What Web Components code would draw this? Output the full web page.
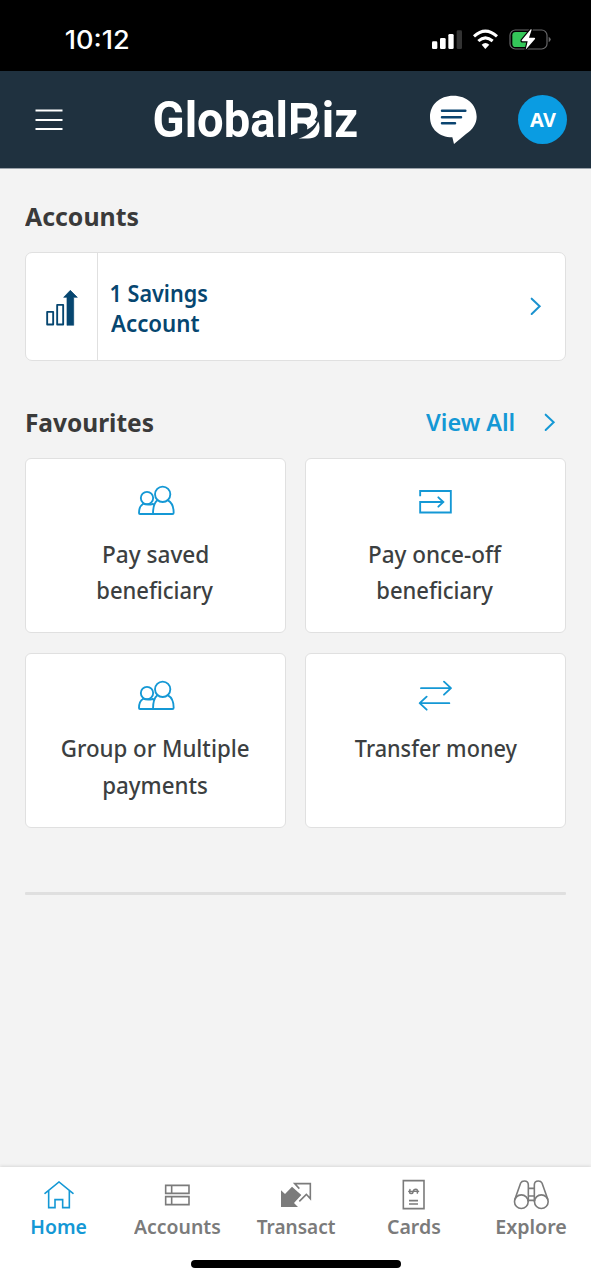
<!DOCTYPE html>
<html lang="en">
<head>
<meta charset="utf-8">
<meta name="viewport" content="width=device-width">
<title>GlobalBiz</title>
<style>
body{margin:0;background:#f3f3f3;font-family:"Noto Sans",sans-serif;color:#3c3f41}
</style>
</head>
<body>
<biz-app></biz-app>
<script>
const define = (name, html, ready) => {
  const tpl = document.createElement('template');
  tpl.innerHTML = html;
  customElements.define(name, class extends HTMLElement {
    connectedCallback() {
      if (this.shadowRoot) return;
      this.attachShadow({mode: 'open'}).append(tpl.content.cloneNode(true));
      if (ready) ready(this, this.shadowRoot);
    }
  });
};

const ctx = document.createElement('canvas').getContext('2d');

/* One line of text whose inked width fills the box given by "w". */
define('fit-text', `<style>
:host{display:block;flex:none;white-space:nowrap}
span{display:inline-block;transform-origin:0 50%}
</style><span><slot></slot></span>`, (el, root) => {
  const w = +el.getAttribute('w');
  const cs = getComputedStyle(el);
  /* Measured large, since small sizes report bounds in whole pixels. */
  const size = parseFloat(cs.fontSize);
  ctx.font = `${cs.fontWeight} ${size * 10}px ${cs.fontFamily}`;
  const m = ctx.measureText(el.textContent.trim());
  const left = m.actualBoundingBoxLeft / 10;
  const k = w / (m.actualBoundingBoxRight / 10 + left);
  el.style.width = w + 'px';
  root.querySelector('span').style.transform =
    `translateX(${left * k}px) scaleX(${k})`;
});

const icons = {
  people: ['380 258 114 94', 5.6, `<circle cx="410" cy="297" r="18.500"/><circle cx="457" cy="286" r="23"/><path d="M398 315C389 320 386 331 386 342Q386 345 389 345H486Q490 345 490 341C490 324 484 310 473 304M441 304C432 311 428 326 428 345M398 314Q410 319 428 315"/>`],
  payin: ['355 117 103 75', 5.6, `<path stroke-linejoin="miter" stroke-linecap="butt" d="M361.500 139V123H453.500V187.500H361.500V156H431"/><path stroke-linejoin="miter" d="M416 142L431 156L416 170"/>`],
  swap: ['356 122 104 94', 5.6, `<path d="M365 146.500H454M434 127L455 146.500L434 166M450 191.500H362M382 172L361 191.500L382 211"/>`],
  chevron: ['714 168 40 62', 6, `<path stroke-linejoin="miter" d="M722 176L746 199L722 222"/>`],
  bars: ['134 298 102 115', 5.6, `<rect x="140.500" y="366.500" width="18" height="38"/><rect x="170.500" y="345.500" width="18" height="59"/><path fill="currentColor" stroke-width="2" d="M200 406V323H190L210 302L231 323H220V406Z"/>`],
  home: ['130 78 96 87', 4.8, `<path stroke-linejoin="miter" d="M136 115L178 81L220 115M147 107V158H166V134H189V158H209V107"/>`],
  accounts: ['492 87 80 67', 4.8, `<path stroke-linejoin="miter" d="M497 91H567V115H497ZM515 91V115M497 125H567V149H497ZM515 125V149"/>`],
  transact: ['178 81 96 80', 4.8, `<path stroke-linejoin="miter" fill="currentColor" stroke="none" d="M181 106L193 117L214 95L242 120L220 144L232 156H181Z"/><path stroke-linejoin="miter" stroke-linecap="butt" d="M236 101L222 86H269V131L257 118L236 139"/>`],
  cards: ['33 72 71 94', 4.8, `<path stroke-linejoin="miter" d="M37 77H99V161H37Z"/><path stroke-linecap="butt" d="M54 137H81M54 147H81"/><path d="M57 104Q53 116 61 115.500Q66 115 67 109Q68 103 74 103Q82 103 79 114"/><path stroke-width="4" d="M53 109H83"/>`],
  explore: ['367 73 111 93', 4.8, `<circle cx="392" cy="138" r="20.500"/><circle cx="452" cy="138" r="20.500"/><path d="M373 130L390 82Q393 76 401 76Q413 76 413 88V137M471 130L454 82Q451 76 443 76Q431 76 431 88V137M414 98H430M414 121H430M412 134H432"/>`]
};

define('line-icon', `<style>
:host{display:block;flex:none;line-height:0}
svg{display:block;fill:none;stroke:currentColor;stroke-linecap:round;stroke-linejoin:round}
</style><svg></svg>`, (el, root) => {
  const [box, sw, art] = icons[el.getAttribute('name')];
  const [, , w, h] = box.split(' ').map(Number);
  const svg = root.querySelector('svg');
  svg.setAttribute('viewBox', box);
  svg.setAttribute('width', w / 3);
  svg.setAttribute('height', h / 3);
  svg.setAttribute('stroke-width', sw);
  svg.innerHTML = art;
});

define('status-bar', `<style>
:host{display:flex;height:71px;background:#000;color:#fff;box-sizing:border-box;padding:20px 40px 0 66px;justify-content:space-between}
fit-text{font:550 25px/41px Inter,sans-serif}
svg{display:block;margin-top:8px}
</style>
<fit-text w="62">10:12</fit-text>
<svg width="120" height="24" viewBox="420 84 360 72">
<g fill="#fff"><rect x="423" y="124" width="16" height="23" rx="4"/><rect x="447" y="114" width="17" height="33" rx="4"/><rect x="472" y="102" width="16" height="45" rx="4"/><rect x="497" y="91" width="16" height="56" rx="4" fill="#333"/></g>
<g fill="none" stroke="#fff" stroke-width="9"><path d="M549 109Q583 78 618 109"/><path d="M562 123Q583 104 605 123"/></g>
<path fill="#fff" d="M572 134Q583 124 595 134L583 147Z"/>
<rect x="657" y="90" width="111" height="57" rx="16" fill="none" stroke="#69696b" stroke-width="3.500"/>
<path fill="#69696b" d="M773 110Q779 113 779 118Q779 124 773 127Z"/>
<path fill="#34c759" d="M674 96H711V141H674Q664 141 664 131V106Q664 96 674 96Z"/>
<path fill="#fff" stroke="#000" stroke-width="7" paint-order="stroke" stroke-linejoin="round" d="M720 87L692 121Q691 124 695 124H710L704 149L732 117Q734 113 729 113H714L722 89Z"/>
</svg>`);

define('biz-logo', `<style>
:host{display:flex;position:relative;width:203px;height:49px;color:#fff;font:700 49.500px/51px Roboto,sans-serif}
.b{margin:0 5px 0 6px}
svg{position:absolute;left:134px;top:6px}
</style>
<fit-text w="131">Global</fit-text><fit-text class="b" w="28">B</fit-text><fit-text w="33">iz</fit-text>
<svg width="34" height="40" viewBox="0 0 34 40">
<path fill="#1f313f" d="M2 0H33.500V40H2Z"/>
<path fill="#fff" fill-rule="evenodd" d="M3 2H19.500Q29.500 2 29.500 11.500Q29.500 16 26.500 18.500L28.500 20.500Q25 26 19 28.500Q20.500 23 15.500 22.500H9.500V31.500L3 34ZM9.500 7.500V16.500H18.500Q23 16.500 23 12Q23 7.500 18.500 7.500Z"/>
<path fill="#fff" d="M30.300 20.500Q31.500 23 31.500 26.500Q31.500 37.500 20 37.500H10.500C20 35 27 29 30.300 20.500Z"/>
</svg>`);

define('app-header', `<style>
:host{display:flex;align-items:center;height:97.500px;background:#1f313f;color:#fff;padding:1px 24px 0 35px;box-sizing:border-box;border-bottom:1px solid #9aa2aa}
.menu{margin-right:91px}
biz-logo{margin-right:73px}
.chat{margin-right:40px}
.avatar{width:49px;height:49px;border-radius:50%;background:#0a9ce2;display:flex;align-items:center;justify-content:center}
fit-text{font-size:18.700px;font-weight:700;line-height:50px}
svg{flex:none}
</style>
<svg class="menu" width="28" height="24" viewBox="0 0 28 24" stroke="#fff" stroke-width="2"><path d="M.5 2.500H27.500M.5 12H27.500M.5 21H27.500"/></svg>
<biz-logo></biz-logo>
<svg class="chat" width="48" height="50" viewBox="417 285 144 150"><path fill="#fff" d="M487 287C528 287 557 314 557 350C557 371 545 388 525 402L489 432L484 412C444 411 417 387 417 350C417 314 446 287 487 287Z"/><path stroke="#0b4470" stroke-width="7.500" stroke-linecap="round" d="M453 332.500H523M453 351.500H510M453 370H492"/></svg>
<div class="avatar"><fit-text w="26">AV</fit-text></div>`);

define('account-card', `<style>
:host{display:flex;height:109px;box-sizing:border-box;border:1.500px solid #e0e0e0;border-radius:7px;background:#fff;color:#064670}
.icon{width:71px;border-right:1.500px solid #e0e0e0;display:flex;align-items:center;justify-content:center;box-sizing:content-box;padding-top:3px}
.label{flex:1;padding:26px 0 0 13px;font-size:22.500px;font-weight:600;line-height:30px}
line-icon.go{align-self:center;margin-right:23px;color:#1b92cf}
</style>
<div class="icon"><line-icon name="bars"></line-icon></div>
<div class="label"><slot></slot></div>
<line-icon class="go" name="chevron"></line-icon>`);

define('action-tile', `<style>
:host{display:flex;flex-direction:column;align-items:center;box-sizing:border-box;height:175px;border:1.500px solid #e0e0e0;border-radius:6px;background:#fff;font-size:22.800px;font-weight:500;line-height:36.400px;padding-top:26px}
.icon{height:32px;margin-bottom:19.800px;display:flex;align-items:center;color:#1498d5}
</style>
<div class="icon"><slot name="icon"></slot></div><slot></slot>`);

define('section-title', `<style>
:host{display:flex;align-items:center;color:#3a3a3a;font-size:25.500px;font-weight:700;line-height:36px;height:36px}
</style><slot></slot>`);

define('nav-item', `<style>
:host{flex:1 1 0;display:flex;flex-direction:column;align-items:center;color:#7b7b7b;font-size:19.700px;font-weight:600;line-height:28px}
:host([active]){color:#1498d5}
.icon{height:32px;margin:12px 0 2px;display:flex;align-items:center}
</style><div class="icon"><slot name="icon"></slot></div><slot></slot>`);

define('tab-bar', `<style>
:host{display:block;height:113px;background:#fff;box-shadow:0 -1px 3px #0000001c}
nav{display:flex;height:93px}
.grip{width:210px;height:8px;border-radius:4px;background:#000;margin:0 auto}
</style>
<nav>
<nav-item active><line-icon slot="icon" name="home"></line-icon><fit-text w="54">Home</fit-text></nav-item>
<nav-item><line-icon slot="icon" name="accounts"></line-icon><fit-text w="86">Accounts</fit-text></nav-item>
<nav-item><line-icon slot="icon" name="transact"></line-icon><fit-text w="78">Transact</fit-text></nav-item>
<nav-item><line-icon slot="icon" name="cards"></line-icon><fit-text w="52">Cards</fit-text></nav-item>
<nav-item><line-icon slot="icon" name="explore"></line-icon><fit-text w="69">Explore</fit-text></nav-item>
</nav><div class="grip"></div>`);

define('biz-app', `<style>
:host{display:flex;flex-direction:column;height:1280px;width:591px;overflow:hidden}
main{flex:1;padding:29px 25px 0}
account-card{margin:18.500px 0 43px}
.fav{padding-left:1.500px}
.all{display:flex;align-items:center;margin-left:auto;color:#1498d5;font-size:23px;font-weight:600;gap:29px;padding-right:10px}
.tiles{display:grid;grid-template-columns:1fr 1fr;gap:19.500px 19px;margin-top:18px}
hr{border:0;height:3px;background:#dfdfdf;margin:64px 0 0;border-radius:1px}
</style>
<status-bar></status-bar>
<app-header></app-header>
<main>
<section-title><fit-text w="113">Accounts</fit-text></section-title>
<account-card><fit-text w="96">1 Savings</fit-text><fit-text w="88">Account</fit-text></account-card>
<section-title class="fav"><fit-text w="126">Favourites</fit-text><div class="all"><fit-text w="87.5">View All</fit-text><line-icon name="chevron"></line-icon></div></section-title>
<div class="tiles">
<action-tile><line-icon slot="icon" name="people"></line-icon><fit-text w="103.5">Pay saved</fit-text><fit-text w="115">beneficiary</fit-text></action-tile>
<action-tile><line-icon slot="icon" name="payin"></line-icon><fit-text w="132">Pay once-off</fit-text><fit-text w="115">beneficiary</fit-text></action-tile>
<action-tile><line-icon slot="icon" name="people"></line-icon><fit-text w="186.5">Group or Multiple</fit-text><fit-text w="103">payments</fit-text></action-tile>
<action-tile><line-icon slot="icon" name="swap"></line-icon><fit-text w="162">Transfer money</fit-text></action-tile>
</div>
<hr>
</main>
<tab-bar></tab-bar>`);
</script>
</body>
</html>
